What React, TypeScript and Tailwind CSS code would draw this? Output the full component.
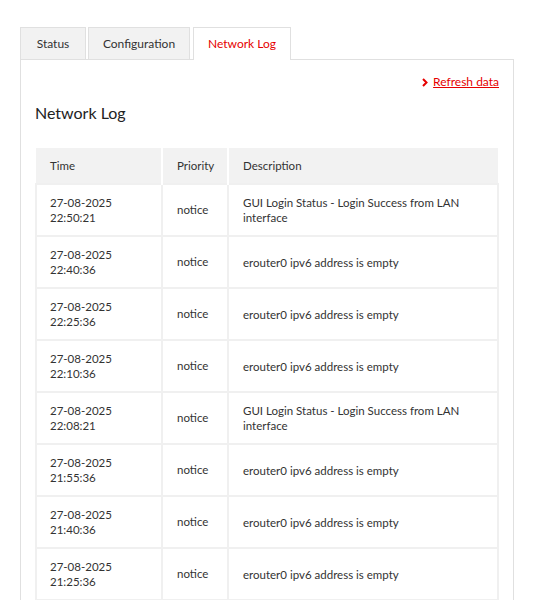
import React from 'react';

const rows = [
  { date: '27-08-2025', time: '22:50:21', desc: 'GUI Login Status - Login Success from LAN interface' },
  { date: '27-08-2025', time: '22:40:36', desc: 'erouter0 ipv6 address is empty' },
  { date: '27-08-2025', time: '22:25:36', desc: 'erouter0 ipv6 address is empty' },
  { date: '27-08-2025', time: '22:10:36', desc: 'erouter0 ipv6 address is empty' },
  { date: '27-08-2025', time: '22:08:21', desc: 'GUI Login Status - Login Success from LAN interface' },
  { date: '27-08-2025', time: '21:55:36', desc: 'erouter0 ipv6 address is empty' },
  { date: '27-08-2025', time: '21:40:36', desc: 'erouter0 ipv6 address is empty' },
  { date: '27-08-2025', time: '21:25:36', desc: 'erouter0 ipv6 address is empty' },
];

const tabs = ['Status', 'Configuration', 'Network Log'];

export default function App() {
  return (
    <div className="min-h-screen bg-white pt-[27px] pl-[20px] pr-[38px] text-[#333] font-['Lato','Open_Sans',sans-serif]">
      <div className="flex gap-[2px] h-[33px]">
        {tabs.map((t) =>
          t === 'Network Log' ? (
            <div
              key={t}
              className="relative z-10 w-[98px] ml-[1px] h-[33px] bg-white border border-b-0 border-[#e0e0e0] flex items-center justify-center text-[12px] text-[#e60000]"
            >
              {t}
            </div>
          ) : (
            <div
              key={t}
              className={`h-[33px] bg-[#f2f2f2] border border-[#e0e0e0] flex items-center justify-center text-[12px] text-[#333] ${
                t === 'Status' ? 'w-[66px]' : 'w-[102px]'
              }`}
            >
              {t}
            </div>
          ),
        )}
      </div>
      <div className="-mt-px border border-[#e0e0e0] px-[14px] h-[580px] overflow-hidden">
        <div className="flex justify-end pt-[13px]">
          <a className="flex items-center gap-[5px] text-[12px] text-[#e60000] underline">
            <svg width="6" height="9" viewBox="0 0 6 9" className="mt-[1px]">
              <path d="M1 1l3.5 3.5L1 8" stroke="#e60000" strokeWidth="2" fill="none" />
            </svg>
            Refresh data
          </a>
        </div>
        <h2 className="mt-[11px] text-[16px] text-[#222] leading-[22px]">Network Log</h2>
        <table className="mt-[24px] w-full border-collapse text-[11.5px]">
          <thead>
            <tr className="bg-[#f2f2f2] h-[36px]">
              <th className="w-[126px] text-left font-normal pl-[14px] border-r-2 border-white">Time</th>
              <th className="w-[66px] text-left font-normal pl-[14px] border-r-2 border-white">Priority</th>
              <th className="text-left font-normal pl-[14px]">Description</th>
            </tr>
          </thead>
          <tbody>
            {rows.map((r, i) => (
              <tr key={i} className="h-[52px]">
                <td className="border-2 border-[#f0f0f0] pl-[13px] leading-[15px] align-middle">
                  {r.date}
                  <br />
                  {r.time}
                </td>
                <td className="border-2 border-[#f0f0f0] pl-[14px] align-middle">notice</td>
                <td className="border-2 border-[#f0f0f0] pl-[14px] pr-[30px] leading-[15px] align-middle">{r.desc}</td>
              </tr>
            ))}
          </tbody>
        </table>
      </div>
    </div>
  );
}
